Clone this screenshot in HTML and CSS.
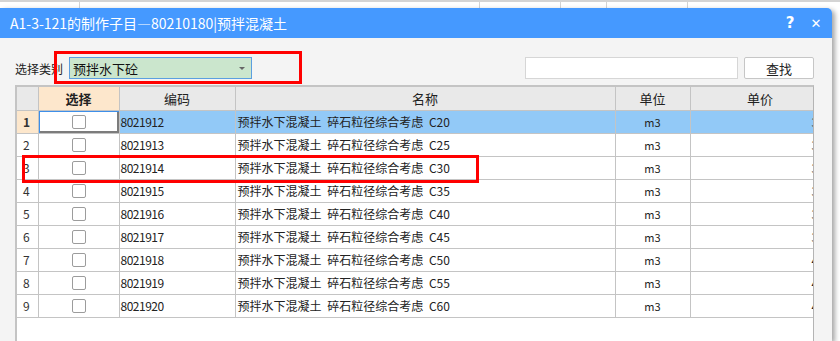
FILE: index.html
```html
<!DOCTYPE html>
<html lang="zh">

<head>
    <meta charset="UTF-8">
    <title>制作子目</title>
    <link rel="stylesheet" href="styles.css">
</head>

<body>
    <div class="page">
        <!-- 背后的表格 -->
        <div class="sheet">
            <span class="sheet-cell" style="width: 80px;"></span>
            <span class="sheet-cell" style="width: 400px;"></span>
            <span class="sheet-cell" style="width: 81px;"></span>
            <span class="sheet-cell" style="width: 46px;"></span>
            <span class="sheet-cell" style="width: 81px;"></span>
        </div>

        <div class="dialog">
            <div class="titlebar">
                <span class="title">A1-3-121的制作子目—80210180|预拌混凝土</span>
                <span class="title-btn">?</span>
                <span class="title-btn close">✕</span>
            </div>

            <div class="dialog-body">
                <div class="toolbar">
                    <span class="label">选择类别</span>
                    <div class="combo">
                        <span>预拌水下砼</span>
                        <span class="arrow"></span>
                    </div>
                    <div class="spacer"></div>
                    <input class="search" type="text">
                    <button class="btn">查找</button>
                </div>

                <div class="grid">
                    <table>
                        <colgroup>
                            <col style="width: 21px;">
                            <col style="width: 81px;">
                            <col style="width: 116px;">
                            <col style="width: 380px;">
                            <col style="width: 75px;">
                            <col style="width: 140px;">
                        </colgroup>
                        <thead>
                            <tr>
                                <th></th>
                                <th class="pick">选择</th>
                                <th>编码</th>
                                <th>名称</th>
                                <th>单位</th>
                                <th>单价</th>
                            </tr>
                        </thead>
                        <tbody id="rows"></tbody>
                    </table>
                </div>
            </div>
        </div>

        <!-- 红色标注框 -->
        <div class="mark mark-combo"></div>
        <div class="mark mark-row"></div>
    </div>

    <script>
        var grades = ['C20', 'C25', 'C30', 'C35', 'C40', 'C45', 'C50', 'C55', 'C60'];
        var prices = ['3', '3', '3', '3', '3', '3', '4', '4', '4'];
        var tbody = document.getElementById('rows');

        grades.forEach(function (g, i) {
            var tr = document.createElement('tr');
            if (i === 0) tr.className = 'current';
            tr.innerHTML =
                '<td class="num">' + (i + 1) + '</td>' +
                '<td class="check"><span class="box"></span></td>' +
                '<td class="code">' + (8021912 + i) + '</td>' +
                '<td class="name">预拌水下混凝土 碎石粒径综合考虑 ' + g + '</td>' +
                '<td class="unit">m3</td>' +
                '<td class="price">' + prices[i] + '</td>';
            tbody.appendChild(tr);
        });
    </script>
</body>

</html>
```

FILE: styles.css
```css
* {
    margin: 0;
    padding: 0;
    box-sizing: border-box;
    font-family: 'Noto Sans CJK SC', 'Noto Sans', sans-serif;
}

body {
    width: 840px;
    height: 341px;
    overflow: hidden;
    background: #fff;
    color: #222;
}

.page {
    position: relative;
    height: 100%;
    display: flex;
    flex-direction: column;
}

.sheet {
    height: 8px;
    display: flex;
    border-top: 2px solid #d4d4d4;
    background: #fff;
}

.sheet-cell {
    border-right: 1px solid #d4d4d4;
}

.dialog {
    flex: 1;
    width: 832px;
    display: flex;
    flex-direction: column;
    border-top-right-radius: 5px;
    overflow: hidden;
    box-shadow: 3px 2px 5px rgba(0, 0, 0, 0.35);
    background: #f4f4f4;
}

.titlebar {
    height: 30px;
    flex-shrink: 0;
    display: flex;
    align-items: center;
    padding-left: 10px;
    background: #4599ff;
    color: #fff;
}

.title {
    flex: 1;
    font-size: 14px;
}

.title-btn {
    width: 26px;
    text-align: center;
    font-size: 15px;
    font-weight: 700;
    font-family: 'DejaVu Sans', sans-serif;
}

.title-btn.close {
    font-size: 13px;
    margin-right: 3px;
}

.dialog-body {
    flex: 1;
    display: flex;
    flex-direction: column;
    padding: 19px 18px 0 15px;
}

.toolbar {
    height: 22px;
    display: flex;
    align-items: center;
    margin-bottom: 6px;
}

.label {
    font-size: 12px;
    width: 54px;
}

.combo {
    width: 183px;
    height: 22px;
    display: flex;
    align-items: center;
    justify-content: space-between;
    padding: 0 6px 0 3px;
    font-size: 13px;
    background: #cbe6cd;
    border: 1px solid #5c9fdf;
    color: #111;
}

.arrow {
    width: 0;
    height: 0;
    border-left: 3px solid transparent;
    border-right: 3px solid transparent;
    border-top: 3px solid #666;
}

.spacer {
    flex: 1;
}

.search {
    width: 213px;
    height: 22px;
    border: 1px solid #d6d6d6;
    background: #fff;
    margin-right: 6px;
}

.btn {
    width: 70px;
    height: 22px;
    border: 1px solid #c6c6c6;
    border-radius: 2px;
    background: #fff;
    font-size: 13px;
    color: #222;
}

.grid {
    flex: 1;
    overflow: hidden;
    background: #fff;
    border-top: 2px solid #c4c4c4;
    border-left: 2px solid #c4c4c4;
    border-right: 1px solid #b4b4b4;
}

table {
    table-layout: fixed;
    border-collapse: collapse;
    width: 813px;
}

th,
td {
    height: 23px;
    border-right: 1px solid #c4c4c4;
    border-bottom: 1px solid #c4c4c4;
    white-space: nowrap;
    overflow: hidden;
}

th {
    font-size: 13px;
    font-weight: 400;
    background: #e9e9e9;
    color: #222;
}

th.pick {
    background: #fde7cc;
    font-weight: 700;
}

td {
    font-size: 12px;
    color: #222;
}

.num {
    padding-left: 6px;
    color: #333;
}

.check {
    text-align: center;
}

.box {
    display: inline-block;
    width: 14px;
    height: 14px;
    margin-top: 3px;
    border: 1px solid #9c9c9c;
    border-radius: 2px;
    background: #fff;
}

.code {
    padding-left: 1px;
    letter-spacing: -0.5px;
}

.name {
    padding-left: 2px;
    word-spacing: 3px;
}

.unit {
    text-align: center;
    font-size: 11px;
}

.price {
    padding-left: 121px;
}

.current td {
    background: #92c9f7;
}

.current .num {
    background: #fde7cc;
    font-weight: 700;
}

.current .check {
    background: #fff;
    box-shadow: inset 1px 1px 0 #3e8fe9, inset -2px -2px 0 #7c7c7c;
}

.mark {
    position: absolute;
    border: 3px solid #f00;
}

.mark-combo {
    left: 54px;
    top: 51px;
    width: 248px;
    height: 33px;
}

.mark-row {
    left: 22px;
    top: 155px;
    width: 457px;
    height: 28px;
}
```
